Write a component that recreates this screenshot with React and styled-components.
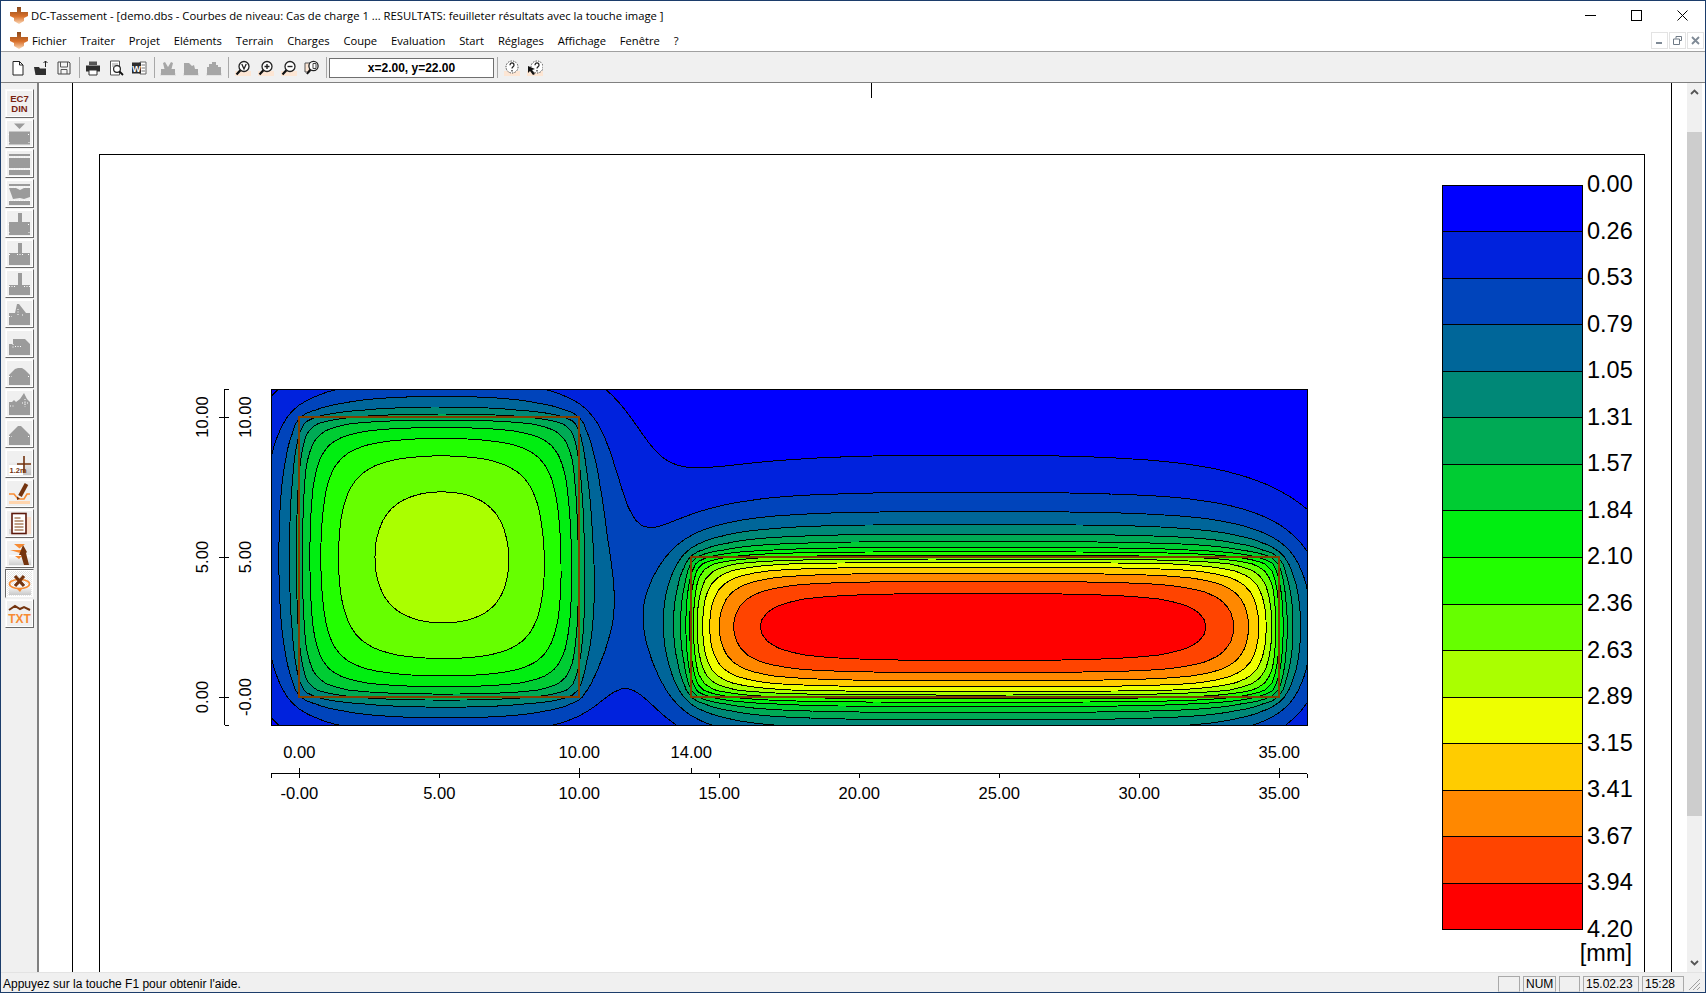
import React from "react";
import styled, { createGlobalStyle } from "styled-components";

const GlobalStyle = createGlobalStyle`
    html, body {
        margin: 0;
        width: 1706px;
        height: 993px;
        overflow: hidden;
        background: #fff;
    }
`;

/* ---------- settlement field + contour tracing ---------- */

const STEP = 0.25;
const X0 = -1.5;
const Y0 = -1.5;
const NX = 153;
const NY = 53;
const HEIGHT = 5.2;
const LOADS = [
    { x0: 0, x1: 10, y0: 0, y1: 10, q: 0.608 },
    { x0: 14, x1: 35, y0: 0, y1: 5, q: 1.052 },
];

const COLORS = [
    "#0000ff", "#0022dd", "#0044bb", "#006699", "#008877", "#00aa55", "#00cc33", "#00ee11",
    "#22ff00", "#66ff00", "#aaff00", "#eeff00", "#ffcc00", "#ff8800", "#ff4400", "#ff0000",
];
const LEGEND = ["0.00", "0.26", "0.53", "0.79", "1.05", "1.31", "1.57", "1.84", "2.10", "2.36", "2.63", "2.89", "3.15", "3.41", "3.67", "3.94", "4.20"];

const px = (x) => 299.3 + 28 * x;
const py = (y) => 697 - 28 * y;

function kernel(r) {
    const R = Math.sqrt(r * r + HEIGHT * HEIGHT);
    return (3 / (2 * Math.PI)) * (2 / (3 * r) - 1 / R + (r * r) / (3 * R * R * R));
}

function buildField() {
    const field = new Float64Array(NX * NY);
    for (const l of LOADS) {
        const area = STEP * STEP * l.q;
        const sx = [];
        const sy = [];
        for (let a = l.x0 + STEP / 2; a < l.x1; a += STEP) sx.push(a);
        for (let b = l.y0 + STEP / 2; b < l.y1; b += STEP) sy.push(b);
        for (let j = 0; j < NY; j++) {
            const y = Y0 + j * STEP;
            for (let i = 0; i < NX; i++) {
                const x = X0 + i * STEP;
                let sum = 0;
                for (const a of sx) {
                    for (const b of sy) {
                        sum += kernel(Math.hypot(x - a, y - b));
                    }
                }
                field[j * NX + i] += sum * area;
            }
        }
    }
    // outer ring below every level, so each contour closes outside the plot
    for (let i = 0; i < NX; i++) {
        field[i] = -1;
        field[(NY - 1) * NX + i] = -1;
    }
    for (let j = 0; j < NY; j++) {
        field[j * NX] = -1;
        field[j * NX + NX - 1] = -1;
    }
    return field;
}

function contourPath(field, level) {
    const v = (i, j) => field[j * NX + i];
    const links = new Map();
    const points = new Map();
    const edgeId = (i, j, vertical) => (j * NX + i) * 2 + (vertical ? 1 : 0);

    const edgePoint = (i, j, vertical) => {
        const id = edgeId(i, j, vertical);
        if (!points.has(id)) {
            const a = v(i, j);
            const b = vertical ? v(i, j + 1) : v(i + 1, j);
            const t = (level - a) / (b - a);
            const x = X0 + (i + (vertical ? 0 : t)) * STEP;
            const y = Y0 + (j + (vertical ? t : 0)) * STEP;
            points.set(id, `${px(x).toFixed(1)} ${py(y).toFixed(1)}`);
        }
        return id;
    };
    const link = (a, b) => {
        if (!links.has(a)) links.set(a, []);
        if (!links.has(b)) links.set(b, []);
        links.get(a).push(b);
        links.get(b).push(a);
    };

    for (let j = 0; j < NY - 1; j++) {
        for (let i = 0; i < NX - 1; i++) {
            const a = v(i, j) >= level;
            const b = v(i + 1, j) >= level;
            const c = v(i + 1, j + 1) >= level;
            const d = v(i, j + 1) >= level;
            const code = (a ? 1 : 0) | (b ? 2 : 0) | (c ? 4 : 0) | (d ? 8 : 0);
            if (code === 0 || code === 15) continue;
            const top = () => edgePoint(i, j, false);
            const bottom = () => edgePoint(i, j + 1, false);
            const left = () => edgePoint(i, j, true);
            const right = () => edgePoint(i + 1, j, true);
            switch (code) {
                case 1: case 14: link(top(), left()); break;
                case 2: case 13: link(top(), right()); break;
                case 4: case 11: link(right(), bottom()); break;
                case 8: case 7: link(left(), bottom()); break;
                case 3: case 12: link(left(), right()); break;
                case 6: case 9: link(top(), bottom()); break;
                default:
                    link(top(), left());
                    link(right(), bottom());
            }
        }
    }

    const seen = new Set();
    let path = "";
    for (const start of links.keys()) {
        if (seen.has(start)) continue;
        let cur = start;
        let prev = -1;
        path += `M${points.get(cur)}`;
        seen.add(cur);
        for (;;) {
            const nexts = links.get(cur);
            const next = nexts[0] !== prev ? nexts[0] : nexts[1];
            if (next === undefined || seen.has(next)) break;
            path += `L${points.get(next)}`;
            seen.add(next);
            prev = cur;
            cur = next;
        }
        path += "Z";
    }
    return path;
}

function buildBands() {
    const field = buildField();
    return LEGEND.slice(1, 16).map((label, k) => ({
        color: COLORS[k + 1],
        d: contourPath(field, parseFloat(label)),
    }));
}

/* ---------- window chrome ---------- */

const Win = styled.div`
    box-sizing: border-box;
    width: 1706px;
    height: 993px;
    display: flex;
    flex-direction: column;
    border: 1px solid #1c3d6b;
    background: #fff;
    overflow: hidden;
    font-family: "Open Sans", "Liberation Sans", sans-serif;
    color: #000;
`;

const TitleBar = styled.div`
    height: 29px;
    flex: none;
    display: flex;
    align-items: center;
    padding: 0 0 1px 8px;
    box-sizing: border-box;
    background: #fff;
`;

const TitleText = styled.span`
    margin-left: 2px;
    font-size: 11.27px;
    white-space: nowrap;
`;

const Caption = styled.div`
    margin-left: auto;
    display: flex;
`;

const CaptionBtn = styled.div`
    width: 46px;
    height: 28px;
    display: flex;
    align-items: center;
    justify-content: center;
`;

const MenuBar = styled.div`
    height: 22px;
    flex: none;
    box-sizing: border-box;
    display: flex;
    align-items: center;
    padding: 0 1px 1px 8px;
    border-bottom: 1px solid #a0a0a0;
    font-size: 11.2px;
`;

const MenuItem = styled.span`
    margin-right: 13.85px;
    white-space: nowrap;
`;

const MenuLogo = styled.span`
    display: flex;
    margin-right: 3px;
`;

const MdiBtns = styled.div`
    margin-left: auto;
    display: flex;
    gap: 1px;
`;

const MdiBtn = styled.div`
    width: 17px;
    height: 17px;
    box-sizing: border-box;
    border: 1px solid #e3e3e3;
    display: flex;
    align-items: center;
    justify-content: center;
`;

const ToolBar = styled.div`
    height: 31px;
    flex: none;
    box-sizing: border-box;
    display: flex;
    align-items: center;
    padding: 1px 0 0 5.5px;
    background: #f0f0f0;
    border-bottom: 1px solid #808080;
`;

const ToolBtn = styled.div`
    width: 23px;
    height: 20px;
    display: flex;
    align-items: center;
    justify-content: center;
    margin-left: ${(p) => p.$shift || 0}px;
`;

const ToolSep = styled.div`
    width: 1px;
    height: 21px;
    margin: 0 3px;
    background: #a8a8a8;
`;

const CoordBox = styled.div`
    box-sizing: border-box;
    width: 165px;
    height: 20px;
    margin-left: -1px;
    display: flex;
    align-items: center;
    justify-content: center;
    background: #fff;
    border: 1px solid #6f6f6f;
    font-family: "Liberation Sans", Arial, sans-serif;
    font-size: 12px;
    font-weight: 700;
`;

const Body = styled.div`
    flex: 1;
    min-height: 0;
    display: flex;
`;

const SideBar = styled.div`
    width: 38px;
    flex: none;
    box-sizing: border-box;
    padding: 6px 0 0 4px;
    background: #f0f0f0;
    border-right: 2px solid #808080;
    display: flex;
    flex-direction: column;
    gap: 1px;
`;

const SideBtn = styled.div`
    width: 29px;
    height: 29px;
    box-sizing: border-box;
    border: 1px solid;
    border-color: ${(p) => (p.$on ? "#696969 #f0f0f0 #f0f0f0 #696969" : "#fafafa #696969 #696969 #fafafa")};
    box-shadow: inset 0 0 0 1px #fff;
    background: ${(p) => (p.$on ? "repeating-conic-gradient(#fff 0 25%, #e4e4e4 0 50%) 0 0 / 2px 2px" : "#f0f0f0")};
    display: flex;
    align-items: center;
    justify-content: center;
`;

const DinLabel = styled.div`
    font-family: "Liberation Sans", Arial, sans-serif;
    font-size: 9.5px;
    font-weight: 700;
    line-height: 10px;
    text-align: center;
    color: #7a2410;
`;

const Client = styled.div`
    flex: 1;
    min-width: 0;
    overflow: hidden;
    background: #fff;
    padding-left: 33px;
`;

const Sheet = styled.div`
    position: relative;
    box-sizing: border-box;
    width: 1600px;
    height: 100%;
    padding: 71px 26px 0;
    border-left: 1px solid #000;
    border-right: 1px solid #000;
`;

const PageMark = styled.div`
    position: absolute;
    left: 798px;
    top: 0;
    width: 1px;
    height: 15px;
    background: #000;
`;

const Frame = styled.div`
    box-sizing: border-box;
    height: 900px;
    border: 1px solid #000;
`;

const ChartSvg = styled.svg`
    display: block;
    font-family: "Liberation Sans", Arial, sans-serif;
`;

const ScrollBar = styled.div`
    width: 15px;
    flex: none;
    margin-right: 3px;
    display: flex;
    flex-direction: column;
    background: #f0f0f0;
`;

const ScrollArrow = styled.div`
    height: 18px;
    flex: none;
    display: flex;
    align-items: center;
    justify-content: center;
`;

const ScrollGap = styled.div`
    height: ${(p) => p.$h}px;
    flex: ${(p) => (p.$h ? "none" : 1)};
`;

const ScrollThumb = styled.div`
    height: 684px;
    flex: none;
    background: #cdcdcd;
`;

const StatusBar = styled.div`
    height: 20px;
    flex: none;
    box-sizing: border-box;
    display: flex;
    align-items: center;
    padding: 2px 0 0 2px;
    background: #f0f0f0;
    border-top: 1px solid #e3e3e3;
    font-family: "Liberation Sans", Arial, sans-serif;
    font-size: 12px;
`;

const StatusText = styled.span`
    flex: 1;
`;

const StatusCell = styled.div`
    box-sizing: border-box;
    width: ${(p) => p.$w}px;
    height: 16px;
    margin-right: 3px;
    padding-left: 2px;
    line-height: 15px;
    border: 1px solid #a9a9a9;
    border-bottom-color: #dcdcdc;
`;

const Grip = styled.svg`
    width: 17px;
    height: 17px;
    flex: none;
    margin-left: -2px;
    margin-right: 3px;
`;

/* ---------- icons ---------- */

const Logo = () => (
    <svg width="20" height="18" viewBox="0 0 20 18">
        <defs>
            <linearGradient id="logoFade" x1="0" y1="0" x2="0" y2="1">
                <stop offset="0" stopColor="#8a4a1c" />
                <stop offset="0.55" stopColor="#d9702a" />
                <stop offset="1" stopColor="#fbd9b8" />
            </linearGradient>
        </defs>
        <path d="M8 1h4v5h7v4l-4 2v3l-5 3-5-3v-3l-4-2V6h7z" fill="url(#logoFade)" />
    </svg>
);

const I = ({ children, size = 16 }) => (
    <svg width={size} height={size} viewBox={`0 0 ${size} ${size}`}>
        {children}
    </svg>
);

const Peach = () => <rect x="0" y="11" width="16" height="5" fill="#fde6d4" />;

const Magnifier = ({ children }) => (
    <I>
        <Peach />
        <circle cx="9" cy="6.5" r="5" fill="#fff" stroke="#222" strokeWidth="1.3" />
        <path d="M5.4 10.2 1.5 14.6" stroke="#111" strokeWidth="2.2" />
        {children}
    </I>
);

const HelpDot = ({ x = 8 }) => (
    <>
        <circle cx={x} cy="7" r="6" fill="#fff" stroke="#444" strokeDasharray="1.4 1.2" />
        <path d={`M${x - 2} 5.2c0-3 4-3 4 0 0 1.6-2 1.6-2 3.4M${x} 10v1.4`} fill="none" stroke="#222" strokeWidth="1.2" />
    </>
);

const GrayShape = ({ d }) => (
    <I>
        <rect x="0" y="13" width="16" height="3" fill="#e3e3e3" />
        <path d={d} fill="#a6a6a6" />
    </I>
);

const TOOLS = {
    new: (
        <I>
            <path d="M3 1.5h6.5l3.5 3.5v10H3z" fill="#fff" stroke="#222" />
            <path d="M9.5 1.5V5H13" fill="none" stroke="#222" />
        </I>
    ),
    open: (
        <I>
            <path d="M1 7h5l1 1.5h6V15H2.5z" fill="#2e2e2e" />
            <path d="M12.5 1v6M10.5 3l2-2 2 2" fill="none" stroke="#222" />
        </I>
    ),
    save: (
        <I>
            <path d="M2 2h11l1 1v11H2z" fill="#f4f4f4" stroke="#444" />
            <path d="M4.5 2v5h7V2M5 14v-4.5h6V14" fill="none" stroke="#555" />
        </I>
    ),
    print: (
        <I>
            <path d="M4 1.5h8V5H4z" fill="#555" />
            <path d="M1 5.5h14v6H1z" fill="#2d2d2d" />
            <path d="M4 10h8v5H4z" fill="#fff" stroke="#333" />
        </I>
    ),
    preview: (
        <I>
            <path d="M2.5 1h9v14h-9z" fill="#fff" stroke="#555" />
            <circle cx="9" cy="9" r="3.4" fill="#fff" stroke="#222" strokeWidth="1.2" />
            <path d="M11.5 11.5 15 15" stroke="#111" strokeWidth="1.8" />
            <path d="M4 4h6M4 6h3" stroke="#999" />
        </I>
    ),
    word: (
        <I>
            <path d="M9 2h6v12H9z" fill="#fff" stroke="#666" />
            <path d="M10.5 5H14M10.5 8H14M10.5 11H14" stroke="#777" />
            <path d="M1 2.5h9v11H1z" fill="#2d2d2d" />
            <text x="5.5" y="11.5" textAnchor="middle" fontSize="9" fontWeight="700" fill="#fff" fontFamily="Liberation Sans">W</text>
        </I>
    ),
    cut: <GrayShape d="M1 15V9h3.5L3 3l2-1 3 5 3-5 2 1-1.5 6H15v6z" />,
    load: <GrayShape d="M1 15V3h5l3 3 2-1 1 4h3v6zM7 9h2v1H7z" />,
    soil: <GrayShape d="M1 15V7h2V4h3V2h4v3h2v2h3v8z" />,
    zoomAll: (
        <Magnifier>
            <path d="M6.8 4 9 9l2.2-5" fill="none" stroke="#222" strokeWidth="1.3" />
        </Magnifier>
    ),
    zoomIn: (
        <Magnifier>
            <path d="M6.5 6.5h5M9 4v5" stroke="#222" strokeWidth="1.4" />
        </Magnifier>
    ),
    zoomOut: (
        <Magnifier>
            <path d="M6.5 6.5h5" stroke="#222" strokeWidth="1.4" />
        </Magnifier>
    ),
    zoomPage: (
        <I>
            <path d="M1 3h5v9H1z" fill="#fde6d4" stroke="#555" />
            <circle cx="9.5" cy="6" r="4.6" fill="#fff" stroke="#222" strokeWidth="1.3" />
            <path d="M9 3.5h3v5H9z" fill="none" stroke="#444" />
            <path d="M6.2 9.6 3 14" stroke="#111" strokeWidth="2" />
        </I>
    ),
    help: (
        <I>
            <Peach />
            <HelpDot />
        </I>
    ),
    helpArrow: (
        <I>
            <Peach />
            <HelpDot x={10} />
            <path d="M1 6l7 3-3 1 3 4-2 1-3-4-2 2z" fill="#111" />
        </I>
    ),
};

const GROUPS = [
    ["new", "open", "save"],
    ["print", "preview", "word"],
    ["cut", "load", "soil"],
    ["zoomAll", "zoomIn", "zoomOut", "zoomPage"],
];

const SHIFTS = { print: -1, cut: -1.5, zoomAll: -1 };

const SOIL = "#9b9b9b";

const SoilIcon = ({ d, dots }) => (
    <svg width="25" height="25" viewBox="0 0 25 25">
        <path d={d} fill={SOIL} />
        {(dots || []).map((dot) => (
            <path key={dot} d={dot} stroke="#fff" strokeDasharray="1 1.5" />
        ))}
    </svg>
);

const CORNERS = ["M1 13.5h2", "M21 13.5h2", "M1.5 21.5h1", "M21.5 21.5h1"];

const SIDE_SOIL = [
    { d: "M7 2.5h11l-5.5 5.5zM2 10.5h21v13H2z", dots: CORNERS },
    { d: "M2 3h21v2H2zM2 7h21v10H2zM2 19h21v5H2z", dots: ["M2 6h21", "M2 18h21"] },
    { d: "M2 3h21v2H2zM2 7h7l4 2 4-2h6v9l-6 2-4-1-7 1zM2 20h21v4H2z", dots: ["M2 6h21", "M2 19.500h21"] },
    { d: "M11 2h4v9h8v13H2V11h9z", dots: CORNERS },
    { d: "M11 2h4v10h8v12H2V12h9z", dots: ["M2 13.5h2", "M21 13.5h2", "M10 13.500h6"] },
    { d: "M11 2h4v12h8v10H2V14h9z", dots: ["M2 15.500h7", "M17 15.500h6"] },
    { d: "M10 3h2l7 9h4v12H2V12h6z", dots: ["M11 8v7", "M15 14h2", "M2 15.500h3"] },
    { d: "M2 24V13h4V8h12l5 5v11z", dots: ["M6 13v4", "M8 15.500h7"] },
    { d: "M2 24V14l3-3 3-3 3-1h4l3 2 5 5v10z", dots: ["M2 15.500h3", "M21 15.500h2"] },
    { d: "M2 24V11h3l2-2 2 2 4-3 4-6 3 6 3 3v13z", dots: ["M18 8v8", "M15 12h6", "M3 15h4"] },
    { d: "M2 24V14l5-5 4-4h3l4 4 5 5v10z", dots: ["M2 15.500h3", "M21 15.500h2"] },
];

const SidePlain = ({ children }) => (
    <svg width="25" height="25" viewBox="0 0 25 25">
        {children}
    </svg>
);

const SideFade = ({ id, from = "#ffffff", to = "#bdbdbd", y = 12 }) => (
    <>
        <defs>
            <linearGradient id={id} x1="0" y1="0" x2="0" y2="1">
                <stop offset="0" stopColor={from} />
                <stop offset="1" stopColor={to} />
            </linearGradient>
        </defs>
        <rect x="2" y={y} width="22" height={24 - y} fill={`url(#${id})`} />
    </>
);

const BROWN = "#74340f";
const ORANGE = "#f78b32";

const SIDE_COLOR = [
    <SidePlain key="level">
        <SideFade id="fadeA" from="#f2f2f2" to="#c4c4c4" y={10} />
        <rect x="2" y="14" width="14" height="10" fill="#fff" />
        <path d="M17 5v17M10 13h14" stroke={BROWN} strokeWidth="1.6" />
        <text x="2.500" y="22" fontSize="7.5" fontWeight="700" fill={BROWN} fontFamily="Liberation Sans">1.2m</text>
    </SidePlain>,
    <SidePlain key="pen">
        <path d="M2 20h21v3H2z" fill="#ffd5ae" />
        <path d="M2 13h5l4 5h6l3-5h3" fill="none" stroke={ORANGE} strokeWidth="1.6" />
        <path d="M19.500 3 13 15" stroke={BROWN} strokeWidth="4" />
        <path d="M10 15.500l3 2 -3 1.500z" fill={BROWN} />
    </SidePlain>,
    <SidePlain key="doc">
        <path d="M17 6h7v17h-7z" fill="#fbdfcc" />
        <path d="M2 18h17v5H2z" fill="#d8d8d8" />
        <rect x="5" y="2.500" width="14" height="20" fill="#fff" stroke="#5e1a0c" strokeWidth="1.6" />
        <path d="M7.500 7h6M7.500 10h9M7.500 13h9M7.500 16h9M7.500 19h9" stroke="#ad8262" strokeWidth="1.4" />
    </SidePlain>,
    <SidePlain key="arrow">
        <SideFade id="fadeB" from="#ffffff" to="#cfcfcf" y={14} />
        <path d="M7 3h11l-5.500 4.500zM3 9h14l-4 3zM8 15h7l-3 3z" fill={ORANGE} />
        <path d="M16 4l4 7 -1 1 3 12h-5l-3-10 -2 0z" fill={BROWN} />
    </SidePlain>,
    <SidePlain key="rotate">
        <SideFade id="fadeC" from="#ffffff" to="#c9c9c9" y={14} />
        <ellipse cx="12.500" cy="13" rx="10" ry="4.500" fill="none" stroke={ORANGE} strokeWidth="1.6" />
        <path d="M8 5l9 10M17 5 8 15" stroke={BROWN} strokeWidth="3.200" />
        <path d="M10 18h5l-2 3z" fill={ORANGE} />
    </SidePlain>,
    <SidePlain key="txt">
        <path d="M2 9l6-4 5 3 4-2 6 3" fill="none" stroke={BROWN} strokeWidth="2" />
        <text x="12.500" y="22" textAnchor="middle" fontSize="12" fontWeight="700" fill={ORANGE} fontFamily="Liberation Sans">TXT</text>
    </SidePlain>,
];

/* ---------- the drawing ---------- */

const YTick = ({ y, left, right }) => (
    <path d={`M${left} ${y}H${right}`} stroke="#000" />
);

const XTick = ({ x, up, down }) => (
    <path d={`M${x} ${up}V${down}`} stroke="#000" />
);

const ChartText = ({ x, y, size = 16.6, rotate, anchor = "middle", children }) => (
    <text
        x={x}
        y={y}
        fontSize={size}
        textAnchor={anchor}
        dominantBaseline="central"
        fill="#000"
        transform={rotate ? `rotate(-90 ${x} ${y})` : undefined}
    >
        {children}
    </text>
);

const PLOT = { x: 271.3, y: 389, w: 1036, h: 336 };

function Chart() {
    const bands = React.useMemo(buildBands, []);
    return (
        <ChartSvg width="1545" height="817" viewBox="100 155 1545 817" shapeRendering="crispEdges">
            <defs>
                <clipPath id="plotClip">
                    <rect x={PLOT.x} y={PLOT.y} width={PLOT.w} height={PLOT.h} />
                </clipPath>
            </defs>
            <g clipPath="url(#plotClip)">
                <rect x={PLOT.x} y={PLOT.y} width={PLOT.w} height={PLOT.h} fill={COLORS[0]} />
                {bands.map((b) => (
                    <path key={b.color} d={b.d} fill={b.color} fillRule="evenodd" stroke="#000" strokeWidth="1" />
                ))}
            </g>
            <rect x={PLOT.x} y={PLOT.y} width={PLOT.w} height={PLOT.h} fill="none" stroke="#000" />
            <rect x={px(0)} y={py(10)} width={280} height={280} fill="none" stroke="#804000" strokeWidth="2" />
            <rect x={px(14)} y={py(5)} width={588} height={140} fill="none" stroke="#804000" strokeWidth="2" />

            {/* vertical scales */}
            <path d={`M224.5 ${py(11)}V${py(-1)}`} stroke="#000" />
            {[10, 5, 0].map((v) => (
                <YTick key={`l${v}`} y={py(v)} left={219} right={224.5} />
            ))}
            {[11, 10, 5, 0, -1].map((v) => (
                <YTick key={`r${v}`} y={py(v)} left={224.5} right={229} />
            ))}
            {[10, 5, 0].map((v) => (
                <ChartText key={`la${v}`} x={202} y={py(v)} rotate>{v.toFixed(2)}</ChartText>
            ))}
            <ChartText x={245} y={py(10)} rotate>10.00</ChartText>
            <ChartText x={245} y={py(5)} rotate>5.00</ChartText>
            <ChartText x={245} y={py(0)} rotate>-0.00</ChartText>

            {/* horizontal scales */}
            <path d={`M${PLOT.x} 773.500H${PLOT.x + PLOT.w}`} stroke="#000" />
            {[0, 10, 14, 35].map((v) => (
                <XTick key={`u${v}`} x={px(v)} up={768} down={773.5} />
            ))}
            {[-1, 0, 5, 10, 15, 20, 25, 30, 35, 36].map((v) => (
                <XTick key={`d${v}`} x={px(v)} up={773.5} down={778} />
            ))}
            {[0, 10, 14, 35].map((v) => (
                <ChartText key={`ta${v}`} x={px(v)} y={752}>{v.toFixed(2)}</ChartText>
            ))}
            <ChartText x={px(0)} y={793}>-0.00</ChartText>
            {[5, 10, 15, 20, 25, 30, 35].map((v) => (
                <ChartText key={`ba${v}`} x={px(v)} y={793}>{v.toFixed(2)}</ChartText>
            ))}

            {/* legend */}
            {COLORS.map((c, k) => (
                <rect key={c} x="1442.500" y={185 + k * 46.56} width="140" height="46.56" fill={c} stroke="#000" />
            ))}
            {LEGEND.map((t, k) => (
                <ChartText key={t} x={1587} y={184 + k * 46.56} size={23.5} anchor="start">{t}</ChartText>
            ))}
            <ChartText x={1632} y={953} size={23.5} anchor="end">[mm]</ChartText>
        </ChartSvg>
    );
}

const MENUS = ["Fichier", "Traiter", "Projet", "Eléments", "Terrain", "Charges", "Coupe", "Evaluation", "Start", "Réglages", "Affichage", "Fenêtre", "?"];

export default function App() {
    return (
        <>
            <GlobalStyle />
            <Win>
                <TitleBar>
                    <Logo />
                    <TitleText>DC-Tassement - [demo.dbs - Courbes de niveau: Cas de charge 1 ... RESULTATS: feuilleter résultats avec la touche image ]</TitleText>
                    <Caption>
                        <CaptionBtn>
                            <svg width="11" height="11"><path d="M0 5.500h11" stroke="#000" /></svg>
                        </CaptionBtn>
                        <CaptionBtn>
                            <svg width="11" height="11"><rect x="0.500" y="0.500" width="10" height="10" fill="none" stroke="#000" /></svg>
                        </CaptionBtn>
                        <CaptionBtn>
                            <svg width="11" height="11"><path d="M.5.5l10 10M10.500.5l-10 10" stroke="#000" /></svg>
                        </CaptionBtn>
                    </Caption>
                </TitleBar>

                <MenuBar>
                    <MenuLogo><Logo /></MenuLogo>
                    {MENUS.map((m) => (
                        <MenuItem key={m}>{m}</MenuItem>
                    ))}
                    <MdiBtns>
                        <MdiBtn>
                            <svg width="9" height="9"><path d="M1 7h6" stroke="#7f8a96" strokeWidth="2" /></svg>
                        </MdiBtn>
                        <MdiBtn>
                            <svg width="9" height="9"><path d="M3 2.500V.5h5.500v4H6.500M.5 3h6v5.500h-6z" fill="none" stroke="#6f7a86" /></svg>
                        </MdiBtn>
                        <MdiBtn>
                            <svg width="9" height="9"><path d="M1 1l7 7M8 1 1 8" stroke="#7f8a96" strokeWidth="1.8" /></svg>
                        </MdiBtn>
                    </MdiBtns>
                </MenuBar>

                <ToolBar>
                    {GROUPS.map((group) => (
                        <React.Fragment key={group[0]}>
                            {group.map((name) => (
                                <ToolBtn key={name} $shift={SHIFTS[name]}>{TOOLS[name]}</ToolBtn>
                            ))}
                            <ToolSep />
                        </React.Fragment>
                    ))}
                    <CoordBox>x=2.00, y=22.00</CoordBox>
                    <ToolSep />
                    <ToolBtn $shift={-1}>{TOOLS.help}</ToolBtn>
                    <ToolBtn>{TOOLS.helpArrow}</ToolBtn>
                </ToolBar>

                <Body>
                    <SideBar>
                        <SideBtn>
                            <DinLabel>EC7<br />DIN</DinLabel>
                        </SideBtn>
                        {SIDE_SOIL.map((s) => (
                            <SideBtn key={s.d}>
                                <SoilIcon d={s.d} dots={s.dots} />
                            </SideBtn>
                        ))}
                        {SIDE_COLOR.map((icon, k) => (
                            <SideBtn key={icon.key} $on={k === 4}>{icon}</SideBtn>
                        ))}
                    </SideBar>

                    <Client>
                        <Sheet>
                            <PageMark />
                            <Frame>
                                <Chart />
                            </Frame>
                        </Sheet>
                    </Client>

                    <ScrollBar>
                        <ScrollArrow>
                            <svg width="9" height="6"><path d="M1 5l3.500-3.500L8 5" fill="none" stroke="#555" strokeWidth="1.8" /></svg>
                        </ScrollArrow>
                        <ScrollGap $h={31} />
                        <ScrollThumb />
                        <ScrollGap />
                        <ScrollArrow>
                            <svg width="9" height="6"><path d="M1 1l3.500 3.500L8 1" fill="none" stroke="#555" strokeWidth="1.8" /></svg>
                        </ScrollArrow>
                    </ScrollBar>
                </Body>

                <StatusBar>
                    <StatusText>Appuyez sur la touche F1 pour obtenir l'aide.</StatusText>
                    <StatusCell $w={22} />
                    <StatusCell $w={33}>NUM</StatusCell>
                    <StatusCell $w={21} />
                    <StatusCell $w={56}>15.02.23</StatusCell>
                    <StatusCell $w={42}>15:28</StatusCell>
                    <Grip viewBox="0 0 17 17">
                        <path d="M15 4 4 15M15 8l-7 7M15 12l-3 3" stroke="#a0a0a0" />
                    </Grip>
                </StatusBar>
            </Win>
        </>
    );
}
